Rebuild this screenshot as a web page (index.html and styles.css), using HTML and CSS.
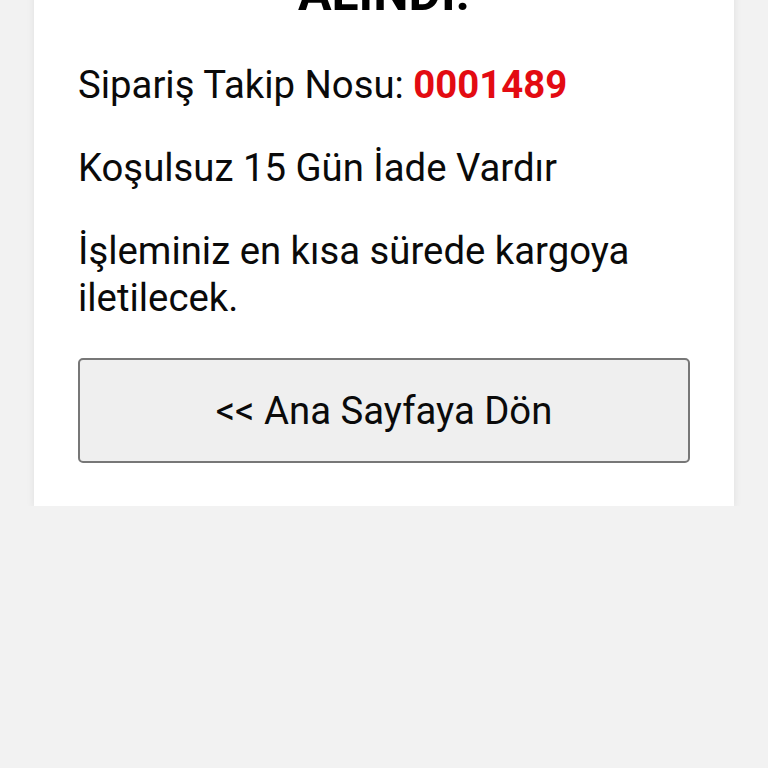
FILE: index.html
```html
<!DOCTYPE html>
<html lang="tr">
<head>
<meta charset="utf-8">
<title>Sipariş Alındı</title>
<link rel="stylesheet" href="styles.css">
</head>
<body>
<main class="page">
  <section class="card">
    <h1 class="title">SİPARİŞİNİZ<br>ALINDI.</h1>
    <p class="line">Sipariş Takip Nosu: <strong class="code">0001489</strong></p>
    <p class="line">Koşulsuz 15 Gün İade Vardır</p>
    <p class="line">İşleminiz en kısa sürede kargoya iletilecek.</p>
    <button class="back" type="button">&lt;&lt; Ana Sayfaya Dön</button>
  </section>
</main>
</body>
</html>
```
FILE: styles.css
```css
html, body {
  margin: 0;
  padding: 0;
  background: #f2f2f2;
  font-family: Roboto, "Noto Sans", sans-serif;
  color: #000;
}
.page {
  padding: 0 34px;
}
.card {
  background: #fff;
  box-shadow: 0 2px 8px rgba(0,0,0,0.08);
  padding: 30px 44px 43px;
  margin-top: -127px;
  display: flex;
  flex-direction: column;
}
.title {
  margin: 0 0 38px;
  text-align: center;
  font-size: 50px;
  font-weight: 700;
  line-height: 60px;
  color: #000;
}
.line {
  margin: 0;
  font-size: 38.3px;
  line-height: 47px;
  color: #0a0a0a;
}
.line + .line { margin-top: 36px; }
.code {
  color: #e30b12;
  font-weight: 700;
}
.back {
  margin-top: 37px;
  height: 105px;
  width: 100%;
  background: #efefef;
  border: 2px solid #777;
  border-radius: 5px;
  font-family: Roboto, "Noto Sans", sans-serif;
  font-size: 38.3px;
  color: #0a0a0a;
}
```
